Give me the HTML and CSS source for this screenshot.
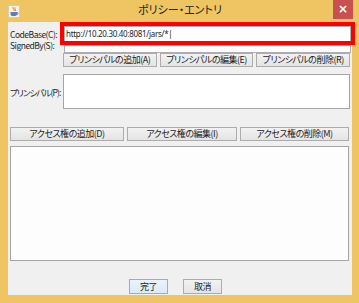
FILE: index.html
```html
<!DOCTYPE html>
<html lang="ja">
<head>
<meta charset="UTF-8" />
<title>ポリシー・エントリ</title>
<link rel="stylesheet" href="styles.css">
</head>
<body>

<div class="window">
  <div class="titlebar">
    <span class="app-icon">
      <svg width="12" height="13" viewBox="0 0 12 13">
        <rect x="0.5" y="0.5" width="11" height="12" fill="#f7f3e8" stroke="#d8ccb0" />
        <path d="M5 2 C4 4 7 4 6 6 M7 2.5 C6.5 4 8 4.5 7.5 6" stroke="#e07a2a" stroke-width="1" fill="none" />
        <path d="M2.5 7 H9 V9 C9 10.5 8 11 6 11 H5 C3.5 11 2.5 10.5 2.5 9 Z" fill="#5b7fb5" />
        <path d="M9 7.5 C10.5 7.5 10.5 9.5 9 9.5" stroke="#5b7fb5" stroke-width="1" fill="none" />
      </svg>
    </span>
    <span class="title">ポリシー・エントリ</span>
    <span class="close">×</span>
  </div>

  <div class="client">
    <div class="form-grid">
      <label class="lbl">CodeBase(C):</label>
      <div class="field">http://10.20.30.40:8081/jars/*|</div>
      <label class="lbl lbl-signed">SignedBy(S):</label>
      <div class="field field-short"></div>
    </div>

    <div class="btn-row principal-btns">
      <button class="btn">プリンシパルの追加(A)</button>
      <button class="btn">プリンシパルの編集(E)</button>
      <button class="btn">プリンシパルの削除(R)</button>
    </div>

    <div class="principal-row">
      <label class="lbl">プリンシパル(P):</label>
      <div class="listbox principal-list"></div>
    </div>

    <div class="btn-row access-btns">
      <button class="btn btn-a1">アクセス権の追加(D)</button>
      <button class="btn btn-a2">アクセス権の編集(I)</button>
      <button class="btn btn-a3">アクセス権の削除(M)</button>
    </div>

    <div class="listbox access-list"></div>

    <div class="footer">
      <button class="btn btn-default">完了</button>
      <button class="btn btn-cancel">取消</button>
    </div>
  </div>

  <!-- 強調枠 -->
  <div class="highlight"></div>
</div>

</body>
</html>
```

FILE: styles.css
```css
/* --- Genel --- */
body {
  margin: 0;
  font-family: "Noto Sans CJK JP", "Noto Sans", sans-serif;
  font-size: 9px;
  font-feature-settings: "palt";
  color: #1e1e1e;
  background: #fff;
}
.window {
  position: relative;
  width: 359px;
  height: 303px;
  background: #efc462;
  box-sizing: border-box;
}

/* Başlık çubuğu */
.titlebar {
  height: 22px;
  display: flex;
  align-items: flex-start;
  position: relative;
}
.app-icon {
  margin: 5px 0 0 8px;
  width: 12px;
  height: 13px;
}
.title {
  flex: 1;
  text-align: center;
  font-size: 11px;
  line-height: 18px;
  color: #222;
  margin-left: 7px;
}
.close {
  width: 20px;
  height: 19px;
  margin-right: 6px;
  background: #c75050;
  color: #fff;
  font-family: "DejaVu Sans", sans-serif;
  font-size: 12px;
  font-weight: bold;
  line-height: 18px;
  text-align: center;
}

/* İçerik */
.client {
  margin: 0 7px 0 8px;
  height: 273px;
  background: #f0f0f0;
  box-sizing: border-box;
  padding: 4px 2px 0 2px;
  display: flex;
  flex-direction: column;
}
.form-grid {
  display: grid;
  grid-template-columns: 54px 287px;
  grid-template-rows: 16px 8px;
  row-gap: 3px;
  align-items: center;
}
.lbl {
  white-space: nowrap;
  line-height: 12px;
  font-size: 8.5px;
  letter-spacing: -0.5px;
}
.lbl-signed {
  align-self: start;
  margin-top: -6px;
}
.field {
  height: 16px;
  box-sizing: border-box;
  border: 1px solid #abadb3;
  background: #fff;
  padding-left: 1px;
  line-height: 14px;
  white-space: nowrap;
  overflow: hidden;
  font-family: "Noto Sans", sans-serif;
  font-size: 8px;
  letter-spacing: -0.3px;
  font-feature-settings: normal;
}
.field-short {
  height: 8px;
}

.btn-row {
  display: flex;
  gap: 3px;
}
.btn {
  height: 14px;
  box-sizing: border-box;
  padding: 0;
  border: 1px solid #acacac;
  background: linear-gradient(#f2f2f2, #e4e4e4);
  font-family: inherit;
  font-size: 9px;
  font-feature-settings: "palt";
  letter-spacing: -0.5px;
  line-height: 12px;
  white-space: nowrap;
  color: #222;
}
.principal-btns {
  margin: 0 0 0 53px;
}
.principal-btns .btn {
  width: 94px;
}

.principal-row {
  display: flex;
  align-items: center;
  margin-top: 7px;
}
.principal-row .lbl {
  width: 53px;
  letter-spacing: -0.9px;
}
.listbox {
  box-sizing: border-box;
  border: 1px solid #a5a5a5;
  background: #fff;
}
.principal-list {
  width: 287px;
  height: 35px;
}

.access-btns {
  margin-top: 18px;
}
.btn-a1 { width: 114px; }
.btn-a2 { width: 110px; }
.btn-a3 { width: 109px; }

.access-list {
  margin-top: 5px;
  width: 339px;
  height: 115px;
  background: #fdfdfd;
}

.footer {
  display: flex;
  justify-content: center;
  gap: 15px;
  margin: 18px 0 0 -9px;
}
.footer .btn {
  width: 39px;
  height: 15px;
}
.btn-default {
  border-color: #7eb4ea;
  background: linear-gradient(#e9f3fc, #dbeaf8);
}

/* Kırmızı vurgu çerçevesi */
.highlight {
  position: absolute;
  left: 60px;
  top: 22px;
  width: 295px;
  height: 23px;
  box-sizing: border-box;
  border: 4px solid #f00;
}
```
